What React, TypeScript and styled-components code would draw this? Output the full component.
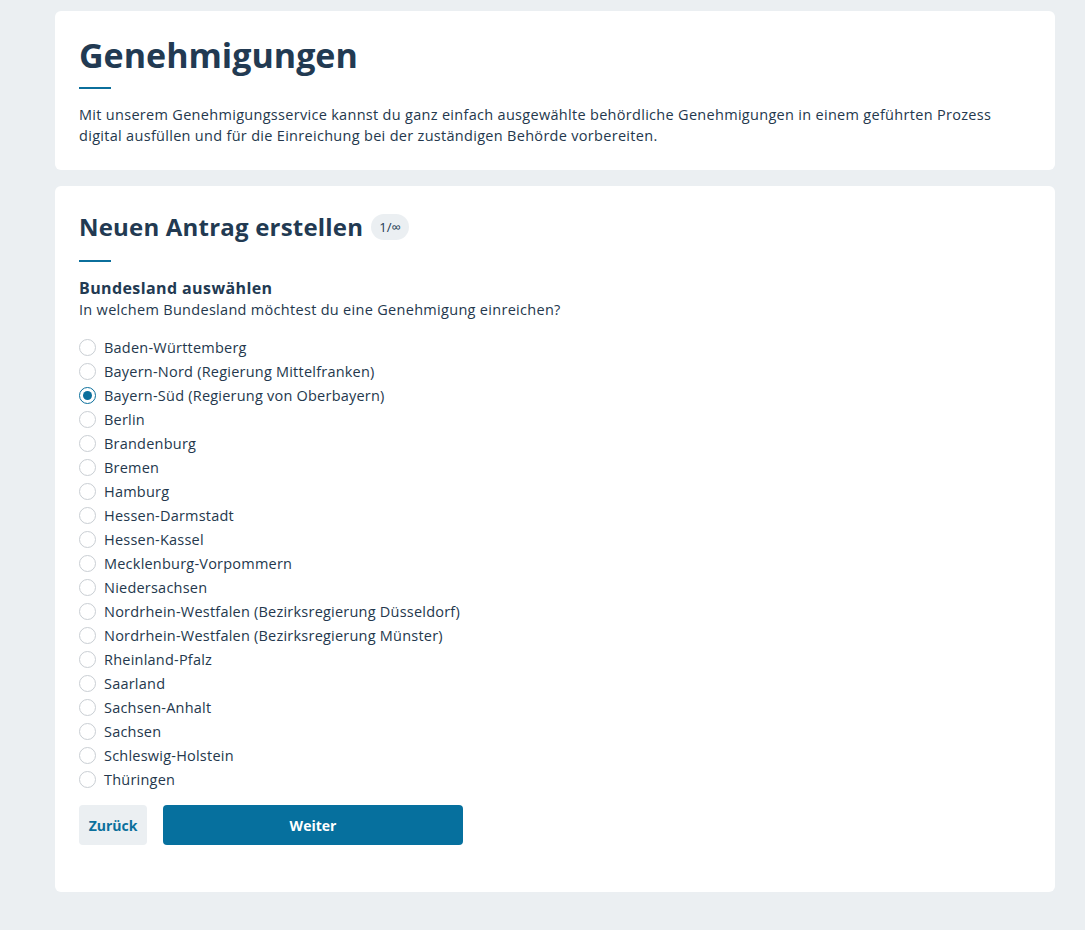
import styled, { createGlobalStyle } from "styled-components";
import { useState } from "react";

const GlobalStyle = createGlobalStyle`
  * { box-sizing: border-box; }
  body {
    margin: 0;
    background: #ebeff2;
    font-family: "Open Sans", "Noto Sans", sans-serif;
    color: #24384d;
  }
`;

const Page = styled.div`
  width: 1000px;
  margin: 0 0 0 55px;
  padding: 11px 0 38px;
  display: flex;
  flex-direction: column;
  gap: 16px;
`;

const Card = styled.section<{ $bottom?: number }>`
  background: #fff;
  border-radius: 6px;
  padding: 24px 24px ${(p) => p.$bottom ?? 24}px;
`;

const PageTitle = styled.h1`
  margin: 0;
  font-size: 34px;
  line-height: 40px;
  font-weight: 700;
  color: #223a52;
`;

const Rule = styled.div<{ $top: number }>`
  width: 32px;
  height: 2px;
  background: #0b6f9c;
  margin-top: ${(p) => p.$top}px;
`;

const Lead = styled.p`
  margin: 15px 0 0;
  font-size: 14.5px;
  line-height: 21px;
  letter-spacing: 0.3px;
  max-width: 930px;
`;

const HeadRow = styled.div`
  display: flex;
  align-items: center;
  gap: 8px;
  height: 34px;
`;

const SectionTitle = styled.h2`
  margin: 0;
  font-size: 24px;
  line-height: 34px;
  font-weight: 700;
  letter-spacing: 0.2px;
  color: #223a52;
`;

const Badge = styled.span`
  display: inline-flex;
  align-items: center;
  justify-content: center;
  height: 26px;
  padding: 0 8px;
  border-radius: 13px;
  background: #ebeff2;
  font-size: 13px;
  color: #223a52;
`;

const FieldLabel = styled.div`
  margin-top: 14px;
  font-size: 16px;
  line-height: 24px;
  font-weight: 700;
  letter-spacing: 0.4px;
  color: #223a52;
`;

const FieldHint = styled.div`
  font-size: 14.5px;
  line-height: 20px;
  letter-spacing: 0.3px;
`;

const Options = styled.div`
  margin-top: 15px;
  display: flex;
  flex-direction: column;
`;

const Option = styled.label`
  display: flex;
  align-items: center;
  gap: 8px;
  height: 24px;
  font-size: 14.5px;
  letter-spacing: 0.22px;
  cursor: pointer;
`;

const Dot = styled.span<{ $on: boolean }>`
  width: 17px;
  height: 17px;
  border-radius: 50%;
  border: 1px solid ${(p) => (p.$on ? "#0b6f9c" : "#c9ced3")};
  display: flex;
  align-items: center;
  justify-content: center;
  flex-shrink: 0;

  &::after {
    content: "";
    width: 9px;
    height: 9px;
    border-radius: 50%;
    background: ${(p) => (p.$on ? "#0b6f9c" : "transparent")};
  }
`;

const HiddenInput = styled.input`
  display: none;
`;

const Actions = styled.div`
  margin-top: 14px;
  display: flex;
  gap: 16px;
`;

const Button = styled.button<{ $primary?: boolean }>`
  height: 40px;
  width: ${(p) => (p.$primary ? "300px" : "68px")};
  padding: 0;
  border: none;
  border-radius: 4px;
  font-family: inherit;
  font-size: 14px;
  font-weight: 700;
  background: ${(p) => (p.$primary ? "#06709e" : "#ebeff2")};
  color: ${(p) => (p.$primary ? "#fff" : "#0b6f9c")};
  cursor: pointer;
`;

const states = [
  "Baden-Württemberg",
  "Bayern-Nord (Regierung Mittelfranken)",
  "Bayern-Süd (Regierung von Oberbayern)",
  "Berlin",
  "Brandenburg",
  "Bremen",
  "Hamburg",
  "Hessen-Darmstadt",
  "Hessen-Kassel",
  "Mecklenburg-Vorpommern",
  "Niedersachsen",
  "Nordrhein-Westfalen (Bezirksregierung Düsseldorf)",
  "Nordrhein-Westfalen (Bezirksregierung Münster)",
  "Rheinland-Pfalz",
  "Saarland",
  "Sachsen-Anhalt",
  "Sachsen",
  "Schleswig-Holstein",
  "Thüringen",
];

export default function App() {
  const [selected, setSelected] = useState("Bayern-Süd (Regierung von Oberbayern)");

  return (
    <>
      <GlobalStyle />
      <Page>
        <Card>
          <PageTitle>Genehmigungen</PageTitle>
          <Rule $top={12} />
          <Lead>
            Mit unserem Genehmigungsservice kannst du ganz einfach ausgewählte behördliche
            Genehmigungen in einem geführten Prozess digital ausfüllen und für die Einreichung bei
            der zuständigen Behörde vorbereiten.
          </Lead>
        </Card>

        <Card $bottom={47}>
          <HeadRow>
            <SectionTitle>Neuen Antrag erstellen</SectionTitle>
            <Badge>1/∞</Badge>
          </HeadRow>
          <Rule $top={16} />
          <FieldLabel>Bundesland auswählen</FieldLabel>
          <FieldHint>In welchem Bundesland möchtest du eine Genehmigung einreichen?</FieldHint>
          <Options>
            {states.map((s) => (
              <Option key={s}>
                <HiddenInput
                  type="radio"
                  name="bundesland"
                  checked={selected === s}
                  onChange={() => setSelected(s)}
                />
                <Dot $on={selected === s} />
                {s}
              </Option>
            ))}
          </Options>
          <Actions>
            <Button>Zurück</Button>
            <Button $primary>Weiter</Button>
          </Actions>
        </Card>
      </Page>
    </>
  );
}
